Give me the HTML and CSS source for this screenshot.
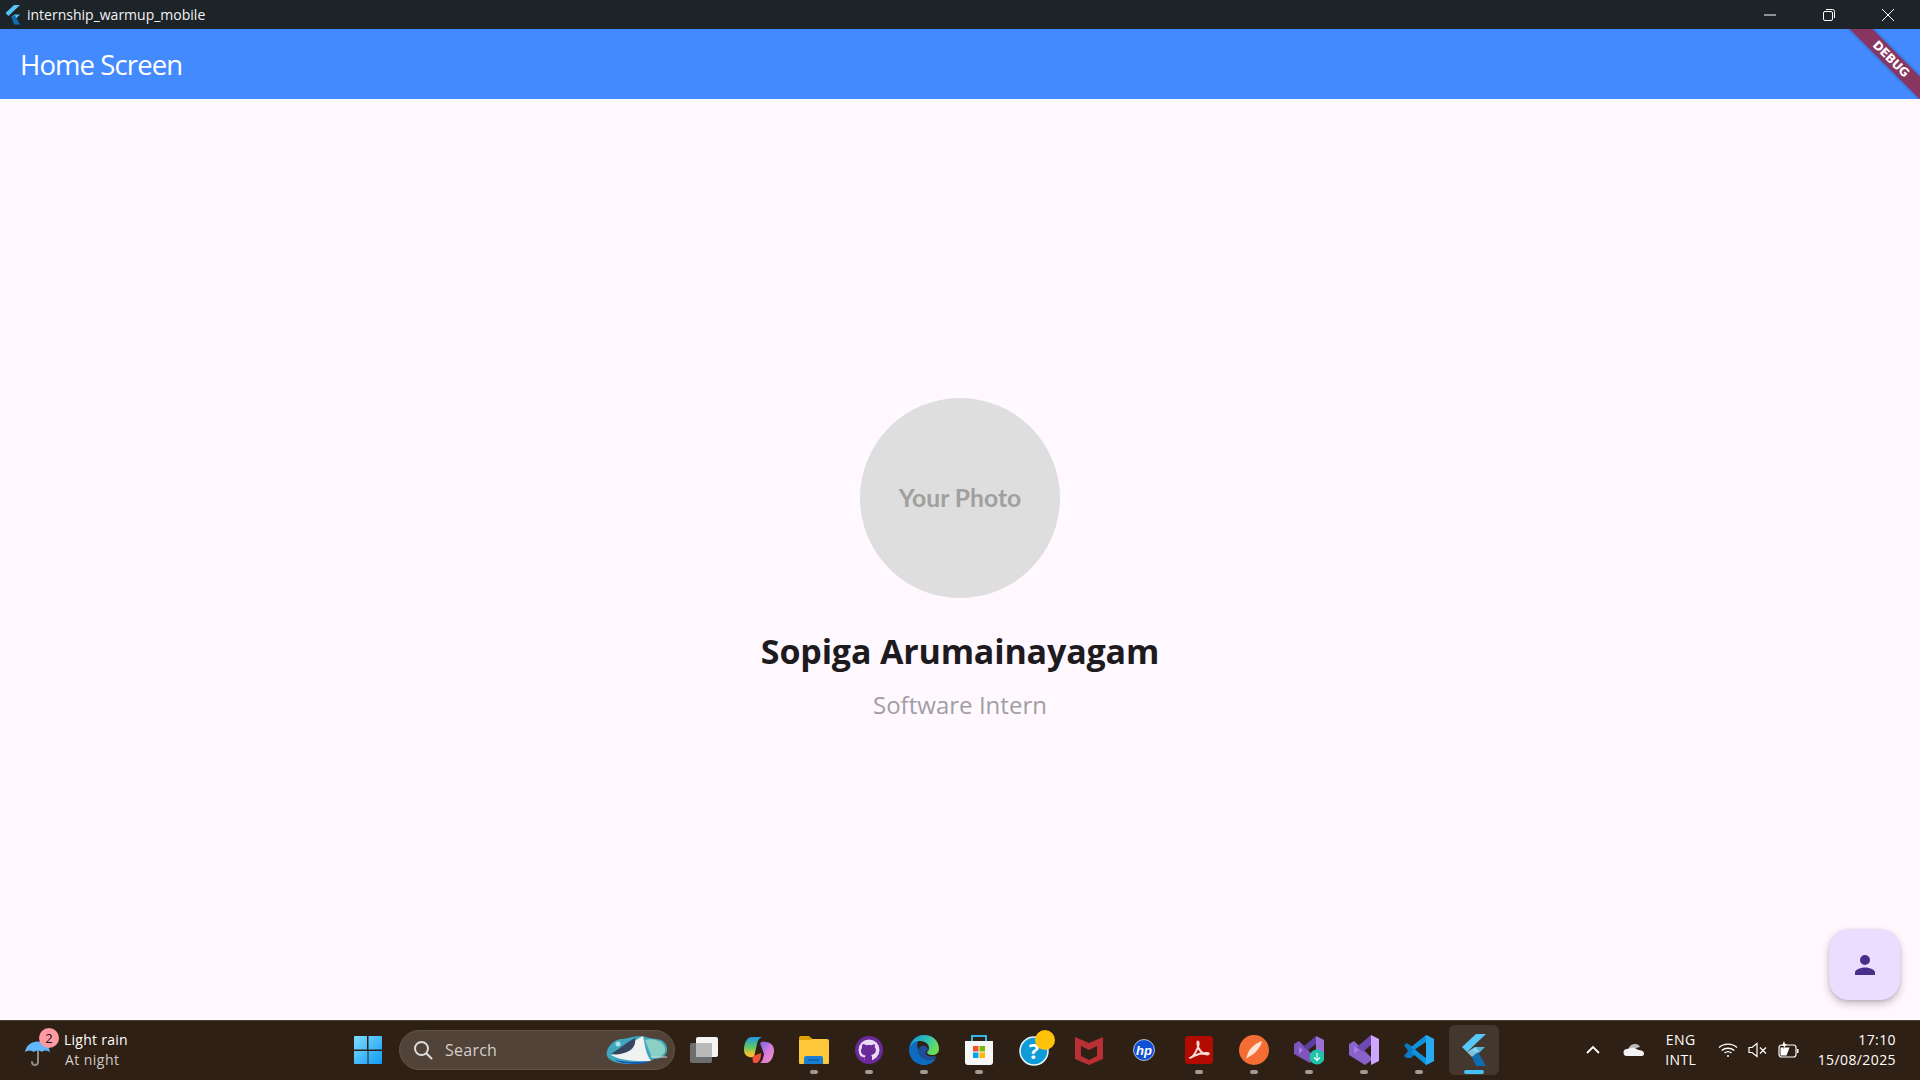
FILE: index.html
```html
<!DOCTYPE html>
<html lang="en">
<head>
<meta charset="utf-8">
<title>internship_warmup_mobile</title>
<link rel="stylesheet" href="styles.css">
</head>
<body>
<div class="window">
  <header class="titlebar">
    <svg class="title-logo" viewBox="0 0 18 20"><path fill="#55c5f8" d="M11 0h6L5.500 11 2.500 8z"/><path fill="#55c5f8" d="M11 9.500h6L11.500 15l-3-3z"/><path fill="#0f6cb0" d="M8.500 12l3-2.500 5.500 10h-6z"/></svg>
    <span class="title-text">internship_warmup_mobile</span>
    <div class="win-controls">
      <span class="win-btn"><svg width="14" height="14" viewBox="0 0 14 14"><path d="M1 7h12" stroke="#fff" stroke-width="1"/></svg></span>
      <span class="win-btn"><svg width="14" height="14" viewBox="0 0 14 14" fill="none" stroke="#fff" stroke-width="1"><rect x="1.500" y="3.500" width="9" height="9" rx="1.500"/><path d="M4 1.500h6.500a2 2 0 0 1 2 2V10"/></svg></span>
      <span class="win-btn"><svg width="14" height="14" viewBox="0 0 14 14"><path d="M1 1l12 12M13 1L1 13" stroke="#fff" stroke-width="1"/></svg></span>
    </div>
  </header>

  <div class="appbar">
    <h1 class="appbar-title">Home Screen</h1>
    <div class="debug-clip"><div class="debug-ribbon">DEBUG</div></div>
  </div>

  <main class="content">
    <div class="avatar"><span class="avatar-label">Your Photo</span></div>
    <h2 class="name">Sopiga Arumainayagam</h2>
    <p class="role">Software Intern</p>
    <button class="fab" aria-label="Profile">
      <svg width="30" height="30" viewBox="0 0 24 24"><path fill="#4a2f8a" d="M12 12a4 4 0 1 0 0-8 4 4 0 0 0 0 8zm0 2c-2.700 0-8 1.300-8 4v2h16v-2c0-2.700-5.300-4-8-4z"/></svg>
    </button>
  </main>

  <footer class="taskbar">
    <div class="weather">
      <span class="weather-icon">
        <svg width="28" height="32" viewBox="0 0 28 32"><path d="M14 14v12a3 3 0 0 1-6 0" fill="none" stroke="#8b8b8b" stroke-width="2" stroke-linecap="round"/><path fill="#63b6fb" d="M1 16C2 9 8 5.500 13.500 5.500S25 9 26 16c-3-2-6-2-8 0-2-2-6-2-8 0-3-2-6-2-9 0z"/></svg>
        <span class="weather-badge">2</span>
      </span>
      <div class="weather-text"><span class="weather-main">Light rain</span><span class="weather-sub">At night</span></div>
    </div>

    <div class="task-center">
      <span class="start"><svg width="30" height="30" viewBox="0 0 30 30"><defs><linearGradient id="w" x1="0" y1="0" x2="1" y2="1"><stop offset="0" stop-color="#7fdcff"/><stop offset="1" stop-color="#0f9bf5"/></linearGradient></defs><path fill="url(#w)" d="M1 2a1 1 0 0 1 1-1h12v13.500H1zM15.500 1H28a1 1 0 0 1 1 1v12.500H15.500zM1 16h13.500v13H2a1 1 0 0 1-1-1zM15.500 16H29v12a1 1 0 0 1-1 1H15.500z"/></svg></span>
      <div class="search">
        <svg width="20" height="20" viewBox="0 0 20 20" fill="none" stroke="#ddd" stroke-width="2"><circle cx="8.500" cy="8.500" r="6.500"/><path d="M13.500 13.500l5 5" stroke-linecap="round"/></svg>
        <span class="search-text">Search</span>
        <svg class="search-art" width="64" height="32" viewBox="0 0 64 32"><path fill="#3fa6bd" d="M2 22C0 15 8 5 17 5c6 0 10-3 18-3 6 0 10 3 16 3 7 0 12 5 11 12-1 6-7 8-13 8-5 3-15 5-24 5C16 30 4 28 2 22z"/><path fill="#8ad0c4" d="M40 6c7-2 18 0 20 8 1 6-4 10-13 10z"/><path fill="#f0f2f2" d="M6 21C16 17 26 8 38 2c2 8 2 17 8 25C30 27 16 27 6 21z"/><path fill="#36455e" d="M6 20C14 15 22 8 30 4c1 5-1 10-6 13-6 3-12 4-18 3z"/><path fill="#1557b8" d="M10 26c10 2 24 3 36 1-6 4-28 4-36-1z"/><circle cx="13" cy="10" r="2.500" fill="#a8e2ea"/><path d="M46 23h16" stroke="#cfd8d8" stroke-width="1"/></svg>
      </div>

      <div class="apps">
        <span class="app"><svg width="32" height="32" viewBox="0 0 32 32"><rect x="2" y="9" width="22" height="20" rx="2" fill="#6e6e6e"/><rect x="8" y="3" width="22" height="20" rx="2" fill="#f4f4f4"/><rect x="8" y="9" width="16" height="14" fill="#b9b9b9"/></svg></span>

        <span class="app"><svg width="30" height="30" viewBox="0 0 30 30"><defs><linearGradient id="c1" x1="0" y1="0" x2="0" y2="1"><stop offset="0" stop-color="#1f9be8"/><stop offset=".5" stop-color="#5cc86a"/><stop offset=".85" stop-color="#f2c230"/></linearGradient><linearGradient id="c2" x1="0" y1="0" x2="1" y2="1"><stop offset="0" stop-color="#6f6be8"/><stop offset=".5" stop-color="#d878e0"/><stop offset="1" stop-color="#f59ab0"/></linearGradient></defs><path fill="url(#c1)" d="M8 2h10c-3 1-4 3-5 7l-3 13c-5 1-10-1-10-7C0 8 3 2 8 2z"/><path fill="url(#c2)" d="M16 8c2-1 3-2 5-1 5 0 9 3 9 8 0 6-3 13-8 13h-6c3-2 3-5 4-9z"/><path fill="#f0503c" d="M9 21l8-3c0 5-1 8-4 10h-2c-2 0-3-1-2-7z"/></svg></span>

        <span class="app running"><svg width="31" height="30" viewBox="0 0 31 30"><path fill="#e0a400" d="M1 3a2 2 0 0 1 2-2h8l3 3h-13z"/><path fill="#e0a400" d="M1 3h12l3 3h15v4H1z"/><path fill="#fdc93b" d="M1 5h11l2 -1h15a2 2 0 0 1 2 2v22a1 1 0 0 1-1 1H2a1 1 0 0 1-1-1z"/><path fill="#1a7fd4" d="M6 23a2 2 0 0 1 2-2h15a2 2 0 0 1 2 2v6H6z"/><path d="M10 25h11" stroke="#0c5ea5" stroke-width="1.500"/></svg></span>

        <span class="app running"><svg width="28" height="28" viewBox="0 0 28 28"><circle cx="14" cy="14" r="14" fill="#6a2a9a"/><circle cx="14" cy="14" r="10.500" fill="#eadcf3"/><path fill="#6a2a9a" d="M8.500 8l3 1.200c1.600-.4 3.400-.4 5 0l3-1.200c.5 1.300.5 2.400.2 3.300 1 1 1.300 2.200 1.100 3.700-.4 2.500-2.300 3.600-4.800 3.900.8.600 1 1.500 1 2.500V25h-7v-2c-2.500.5-3.600-.7-4.300-2.300l1.800-.3c.6 1 1.300 1.200 2.500.9.100-.7.300-1.300.8-1.700-2.500-.3-4.400-1.400-4.800-3.900-.2-1.500.1-2.700 1.100-3.700-.3-.9-.3-2 .2-3.300z"/></svg></span>

        <span class="app running"><svg width="32" height="32" viewBox="0 0 32 32"><defs><linearGradient id="e1" x1="0" y1="0" x2="1" y2=".4"><stop offset="0" stop-color="#0f8fd4"/><stop offset=".6" stop-color="#30c3b4"/><stop offset="1" stop-color="#6bdc58"/></linearGradient></defs><path fill="#0e6bbd" d="M1 16C1 7 8 1 16 1c-6 2-8 8-6 15 2 8 10 12 18 8-3 5-7 7-12 7C7 31 1 24 1 16z"/><path fill="url(#e1)" d="M2 13C4 5 10 1 16 1c9 0 15 6 15 14 0 4-3 6-7 6-3 0-5-1-5-3 1-1 2-2 2-4 0-4-4-7-9-7-4 0-8 2-10 6z"/><path fill="#1f4e96" d="M10 17c0-4 4-6 7-5 2 1 3 2 3 4-2 1-3 2-2 4 1 2 5 3 9 2 1 0 1 1 0 2-5 3-11 2-14-1-2-2-3-4-3-6z"/></svg></span>

        <span class="app running"><svg width="30" height="32" viewBox="0 0 30 32"><path d="M8 7V2h14v5" fill="none" stroke="#38b6e8" stroke-width="2"/><path fill="#f7f7f7" d="M1 7h28v21a3 3 0 0 1-3 3H4a3 3 0 0 1-3-3z"/><rect x="9" y="12" width="5.500" height="5.500" fill="#f2502a"/><rect x="15.500" y="12" width="5.500" height="5.500" fill="#7cba00"/><rect x="9" y="18.500" width="5.500" height="5.500" fill="#00a4ef"/><rect x="15.500" y="18.500" width="5.500" height="5.500" fill="#ffb900"/></svg></span>

        <span class="app"><svg class="overflow-icon" width="38" height="38" viewBox="0 0 38 38"><circle cx="19" cy="20" r="14" fill="#0f9bd7" stroke="#eaf6fb" stroke-width="1.500"/><text x="19" y="28" text-anchor="middle" class="help-mark">?</text><circle cx="30" cy="9" r="10" fill="#ffc20a"/></svg></span>

        <span class="app"><svg width="28" height="32" viewBox="0 0 28 32"><path fill="#b82f34" d="M0 3l14 6 14-6v22L14 31 0 25zM6 12v10l8 4 8-4V12l-8 4z"/></svg></span>

        <span class="app"><svg width="22" height="22" viewBox="0 0 22 22"><circle cx="11" cy="11" r="10.500" fill="#0f4fd6" stroke="#ddd" stroke-width=".8"/><text x="11" y="15.500" text-anchor="middle" class="hp-mark">hp</text></svg></span>

        <span class="app running"><svg width="28" height="28" viewBox="0 0 28 28"><rect width="28" height="28" rx="3.500" fill="#b30b00"/><path fill="none" stroke="#f4ddd9" stroke-width="2" d="M5 22c3-1 6-6 8-11 .8-2.500.8-5.500 0-5.500s-.8 3.500.6 6.500c2 4 5 6.500 9 6.500 1.500 0 1.500-1.500 0-1.500-4-.2-10 1-14 3-2 1-3.600 2-3.600 2.500z"/></svg></span>

        <span class="app running"><svg width="30" height="30" viewBox="0 0 30 30"><circle cx="15" cy="15" r="15" fill="#f46d33"/><path fill="#fbe3d6" d="M7 24l2-6c2-5 8-10 14-12-1 5-5 11-10 14-2 1-4 2-6 4z"/></svg></span>

        <span class="app running"><svg width="30" height="30" viewBox="0 0 30 30"><path fill="#7d55bd" d="M0 9l5-3 17 17-6 5L0 19z"/><path fill="#9a72d6" d="M22 1l8 4v20l-8 4z"/><path fill="#5f3ca0" d="M22 1v8l-8 6-5-3z"/><path fill="#a882e0" d="M5 19v-7l4 3z"/><circle cx="23" cy="22" r="7.500" fill="#21c3a8"/><path d="M23 18v7m-3-2.500l3 3 3-3" fill="none" stroke="#eafffa" stroke-width="1.200"/></svg></span>

        <span class="app running"><svg width="30" height="32" viewBox="0 0 30 32"><path fill="#8a63c9" d="M0 10l5-3 19 18-8 6L0 21z"/><path fill="#cfa6ff" d="M22 1l8 4v22l-8 4z"/><path fill="#7048b4" d="M22 1v10l-8 7-6-5z"/><path fill="#a47ee0" d="M5 20v-8l5 4z"/></svg></span>

        <span class="app running"><svg width="30" height="32" viewBox="0 0 30 32"><path fill="#0a78c2" d="M0 11l3-2 7 5 4 4-7 6-4 0-3-2 4-5z"/><path fill="#0e92dc" d="M22 1l8 4v22l-8 4L7 18l3-3 12 9V8l-12 8-3-3z"/><path fill="#2aaaf3" d="M22 1l8 4v22l-8 4z"/></svg></span>

        <span class="app active"><svg width="26" height="34" viewBox="0 0 26 34"><path fill="#58c8f8" d="M15 1h10L6 19 1 14z"/><path fill="#58c8f8" d="M14 14h10l-7 7-5-4z" opacity=".85"/><path fill="#0f6cb0" d="M11 24l6-5 8 14H15z"/><path fill="#8ddcfb" d="M6 19l8-5 4 4-7 6z" opacity=".85"/></svg></span>
      </div>
    </div>

    <div class="tray">
      <span class="tray-icon chevron"><svg width="16" height="10" viewBox="0 0 16 10"><path d="M2 8l6-6 6 6" fill="none" stroke="#fff" stroke-width="1.800"/></svg></span>
      <span class="tray-icon cloud"><svg width="22" height="14" viewBox="0 0 22 14"><path fill="#bdbdbd" d="M5 7c1-4 4-6 7-6s4 1 5 3z"/><path fill="#f3f3f3" d="M4 13a3.500 3.500 0 0 1 0-7l4-1c3-1 6 1 7 2 3 0 6 1 6 3.500S19 13 18 13z"/></svg></span>
      <span class="lang"><span>ENG</span><span>INTL</span></span>
      <span class="tray-icon wifi"><svg width="20" height="16" viewBox="0 0 20 16" fill="none" stroke="#fff" stroke-width="1.300"><path d="M1 5.500c5-4.500 13-4.500 18 0M3.700 8.500c3.500-3 9-3 12.600 0M6.500 11c2-1.600 5-1.600 7 0"/><circle cx="10" cy="14" r="1" fill="#fff" stroke="none"/></svg></span>
      <span class="tray-icon sound"><svg width="20" height="16" viewBox="0 0 20 16" fill="none" stroke="#fff" stroke-width="1.200"><path d="M1 5.500h3L9 1.500v13l-5-4H1z"/><path d="M12 5.500l6 6M18 5.500l-6 6"/></svg></span>
      <span class="tray-icon battery"><svg width="21" height="18" viewBox="0 0 21 18"><rect x="1" y="4" width="17" height="12" rx="2.500" fill="none" stroke="#fff" stroke-width="1.200"/><path fill="#fff" d="M2.500 6.500h9l-3 8h-6zM19 8h1.500v4H19zM6 0l-2 5h2l-1 3 4-5H7z"/></svg></span>
      <span class="clock"><span>17:10</span><span>15/08/2025</span></span>
    </div>
  </footer>
</div>
</body>
</html>
```

FILE: styles.css
```css
* { box-sizing: border-box; }

html, body {
  margin: 0;
  height: 100%;
  overflow: hidden;
}

body {
  font-family: "Open Sans", "Noto Sans", sans-serif;
  color: #1d1b20;
}

.window {
  display: flex;
  flex-direction: column;
  width: 1920px;
  height: 1080px;
}

/* window chrome */
.titlebar {
  flex: none;
  height: 29px;
  display: flex;
  align-items: center;
  background: #1c2428;
  color: #f2f2f2;
  padding-left: 3px;
  padding-right: 3px;
}

.title-logo {
  width: 18px;
  height: 20px;
  flex: none;
}

.title-text {
  margin-left: 6px;
  font-size: 14px;
}

.win-controls {
  margin-left: auto;
  display: flex;
}

.win-btn {
  width: 59px;
  height: 29px;
  display: flex;
  align-items: center;
  justify-content: center;
}

/* app bar */
.appbar {
  flex: none;
  position: relative;
  height: 70px;
  display: flex;
  align-items: center;
  padding-left: 20px;
  background: #448aff;
}

.appbar-title {
  margin: 0;
  font-size: 27.5px;
  font-weight: 400;
  letter-spacing: -0.9px;
  color: #fff;
}

.debug-clip {
  position: absolute;
  top: 0;
  right: 0;
  width: 90px;
  height: 70px;
  overflow: hidden;
}

.debug-ribbon {
  position: absolute;
  top: 22px;
  left: -4px;
  width: 130px;
  height: 16px;
  transform: rotate(45deg);
  background: #883560;
  box-shadow: 0 0 4px rgba(0, 0, 0, 0.35);
  color: #fff;
  font: 800 12px/16px "DejaVu Sans", sans-serif;
  letter-spacing: -0.3px;
  text-align: center;
}

/* page body */
.content {
  flex: 1;
  position: relative;
  display: flex;
  flex-direction: column;
  align-items: center;
  justify-content: center;
  background: #fff8ff;
}

.avatar {
  width: 200px;
  height: 200px;
  border-radius: 50%;
  display: flex;
  align-items: center;
  justify-content: center;
  padding-bottom: 1px;
  background: #dedede;
}

.avatar-label {
  color: #a0a0a0;
  font-family: "Lato", sans-serif;
  font-size: 24.7px;
  font-weight: 700;
}

.name {
  margin: 30px 0 0;
  font-size: 34px;
  line-height: 46px;
  font-weight: 700;
  letter-spacing: -0.17px;
  color: #1d1b20;
}

.role {
  margin: 15px 0 0;
  font-size: 24px;
  line-height: 32px;
  letter-spacing: 0.03px;
  color: #a09ea3;
}

.fab {
  position: absolute;
  right: 20px;
  bottom: 20px;
  width: 71px;
  height: 71px;
  padding: 0;
  border: 0;
  border-radius: 20px;
  display: flex;
  align-items: center;
  justify-content: center;
  background: #eaddff;
  box-shadow: 0 4px 8px rgba(0, 0, 0, 0.22), 0 1px 3px rgba(0, 0, 0, 0.12);
}

/* taskbar */
.taskbar {
  flex: none;
  position: relative;
  height: 60px;
  display: flex;
  align-items: center;
  padding-bottom: 2px;
  background: #2f2015;
  border-top: 1px solid #4a4037;
  color: #fff;
  font-size: 14px;
}

.weather {
  width: 352px;
  display: flex;
  align-items: center;
  padding-left: 24px;
  flex: none;
}

.weather-icon {
  position: relative;
  width: 28px;
  height: 32px;
  flex: none;
  margin-top: 4px;
}

.weather-badge {
  position: absolute;
  top: -8px;
  right: -7px;
  width: 20px;
  height: 20px;
  border-radius: 50%;
  background: #ff9aa2;
  color: #111;
  font-size: 13px;
  line-height: 20px;
  text-align: center;
}

.weather-text {
  margin-left: 12px;
  display: flex;
  flex-direction: column;
  line-height: 20px;
  letter-spacing: 0.25px;
}

.weather-sub {
  margin-left: 1px;
  letter-spacing: 0.45px;
  color: #cfcbc8;
}

.task-center {
  display: flex;
  align-items: center;
  flex: none;
}

.start {
  width: 32px;
  display: flex;
  justify-content: center;
  flex: none;
}

.search {
  width: 276px;
  height: 40px;
  margin-left: 15px;
  display: flex;
  align-items: center;
  padding-left: 13px;
  border-radius: 20px;
  background: #514338;
  border: 1px solid #5f5246;
  flex: none;
}

.search-text {
  margin-left: 12px;
  color: #d3cfcb;
  font-size: 16px;
  letter-spacing: 0.25px;
}

.search-art {
  margin-left: auto;
  margin-right: 5px;
}

.apps {
  display: flex;
  margin-left: 1px;
}

.app {
  position: relative;
  width: 55px;
  height: 50px;
  display: flex;
  align-items: center;
  justify-content: center;
  flex: none;
}

.app.running::after,
.app.active::after {
  content: "";
  position: absolute;
  left: 50%;
  bottom: 1px;
  width: 8px;
  height: 4px;
  border-radius: 2px;
  transform: translateX(-50%);
  background: #a39a92;
}

.app.active {
  width: 50px;
  margin-left: 3px;
  border-radius: 6px;
  background: #44372d;
}

.app.active::after {
  width: 20px;
  background: #47c0f5;
}

.help-mark {
  font: 700 22px "Open Sans", sans-serif;
  fill: #fff;
}

.hp-mark {
  font: italic 700 13px "Liberation Sans", sans-serif;
  fill: #fff;
}

.overflow-icon {
  overflow: visible;
}

.tray {
  margin-left: auto;
  display: flex;
  align-items: center;
  padding-right: 24px;
}

.tray-icon {
  display: flex;
  align-items: center;
  justify-content: center;
}

.chevron { width: 20px; }
.cloud { width: 24px; margin-left: 19px; }

.lang {
  margin-left: 15px;
  width: 40px;
  display: flex;
  flex-direction: column;
  align-items: center;
  line-height: 20px;
  letter-spacing: 0.4px;
}

.wifi { width: 22px; margin-left: 16px; }
.sound { width: 22px; margin-left: 8px; }
.battery { width: 22px; margin-left: 9px; }

.clock {
  margin-left: 18px;
  display: flex;
  flex-direction: column;
  align-items: flex-end;
  line-height: 20px;
  letter-spacing: 0.4px;
}
```
